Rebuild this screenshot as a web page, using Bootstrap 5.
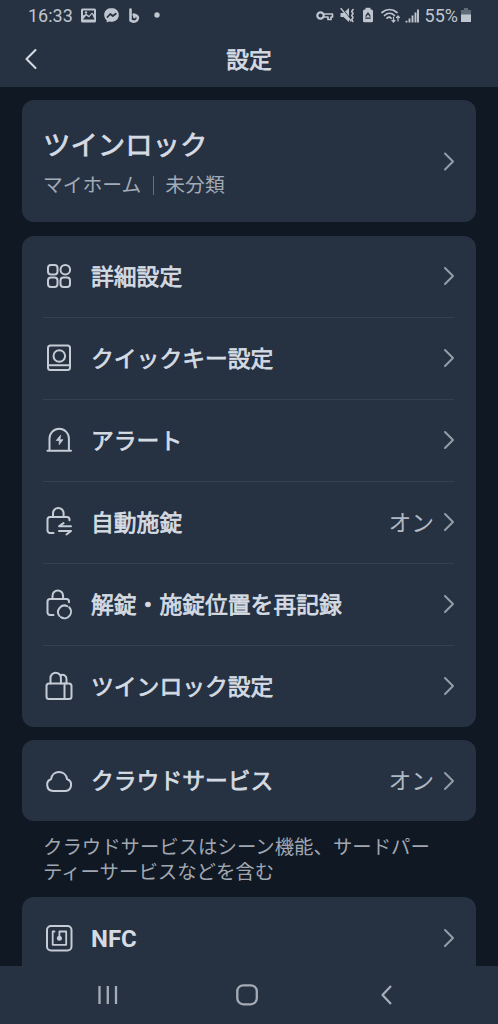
<!DOCTYPE html>
<html lang="ja" data-bs-theme="dark">
<head>
<meta charset="utf-8">
<meta name="viewport" content="width=device-width, initial-scale=1">
<title>設定</title>
<link href="https://cdn.jsdelivr.net/npm/bootstrap@5.3.0/dist/css/bootstrap.min.css" rel="stylesheet">
<style>
body{background:#101823;color:#d5dbe3;font-family:Roboto,"Noto Sans CJK JP",sans-serif;height:1024px}
svg{fill:none;stroke:currentColor;stroke-linecap:round;stroke-linejoin:round;flex:none;display:block;overflow:visible}
.surface{background:#263141}
.top-area{height:87px}
.status-bar{height:31px;padding:0 27px 0 28px;color:#c0c6cf;font-size:18px;line-height:31px}
.title-bar{height:56px;padding:0 24px}
.title-bar h1{font-size:22.8px;line-height:56px;padding:3px 14px 0 0}
.medium-text{font-weight:400;-webkit-text-stroke:.75px currentColor;color:#d5dbe3}
.panel{border:0;border-radius:12px;background:#263141;color:inherit;padding:0 22px 0 21px}
.stack{padding:13px 22px 0;gap:13.6px}
.device{height:122px}
.device h2{font-size:27.4px;line-height:38px}
.device-sub{font-size:19.8px;line-height:28px;color:#a3abb6;padding-top:3px}
.bar-sep{width:1px;height:19px;background:#66707d;margin:0 11px 0 12px}
.entry{height:82px;border-top:1px solid #36414f}
.entry:first-child{border-top:0;height:81px}
.ico{width:30px;height:30px;margin:0 17px 0 1px;color:#c5ccd5;stroke-width:2}
.entry-name{font-size:22.8px;line-height:34px;padding-top:3px}
.latin-name{font-size:24px;font-weight:700;padding-top:2px}
.entry-state{font-size:22.8px;line-height:34px;color:#b0b8c3;padding-top:3px}
.chev{width:12px;height:20px;stroke:#959da8;stroke-width:2}
.note{font-size:19.4px;line-height:25px;color:#a0a7b1;padding:0 0 0 21px;margin:0 0 -1px}
.nav-keys{height:58px;color:#a5acb6;padding-right:4px}
</style>
</head>
<body class="d-flex flex-column overflow-hidden">
<header class="surface top-area flex-shrink-0">
  <div class="status-bar d-flex align-items-center">
    <span>16:33</span>
    <svg width="84" height="20" viewBox="78 5 84 20" style="margin-left:5px" stroke="none">
      <rect x="81" y="7.500" width="15" height="14" rx="1.500" fill="currentColor" stroke="none"/>
      <path d="M83 18.500l3.200-4 2.800 2 3-3.500 2.500 5.500z" fill="#263141" stroke="none"/><path d="M83 14.500v-5h11v4l-2-2-3 3.300-2.700-2z" fill="#263141" stroke="none"/><circle cx="86" cy="11.500" r="1.200" fill="currentColor" stroke="none"/>
      <path d="M111.500 7c-4.300 0-7.300 3-7.300 7 0 2.200 1 4 2.500 5.200v2.300l2.400-1c5 1.200 9.700-1.800 9.700-6.500 0-4-3-7-7.300-7z" fill="currentColor" stroke="none"/>
      <path d="M107.500 16l2.800-3 2.500 2 3-2.300" stroke="#263141" stroke-width="1.800"/>
      <path d="M130.500 8.500v11l3 1.200c3 0 4.700-2 4.400-4.200-.4-2-2.400-2.600-4.200-3l.8 2.600" stroke="currentColor" stroke-width="2.600"/>
      <circle cx="157" cy="14" r="2.700" fill="currentColor" stroke="none"/>
    </svg>
    <svg class="ms-auto" width="106" height="22" viewBox="314 4 106 22" style="margin-right:4px">
      <circle cx="319.500" cy="14.500" r="3.200" stroke-width="2.200"/><path d="M323 13h8.500v3h-1.500v2.500h-3v-2.500h-4" stroke-width="1.700"/>
      <path d="M339.500 12h3l5.500-5v14l-5.500-5h-3z" fill="currentColor" stroke="none"/><path d="M341.200 7.500l9 11.500" stroke="#263141" stroke-width="1.200"/><path d="M340 7.500l10 12.500" stroke-width="1.300"/><path d="M352 8.500l-1.200 2 1.200 2-1.200 2 1.200 2-1.200 2 1 2" stroke-width="1.600"/>
      <rect x="362" y="8.500" width="10" height="12.700" rx="1.500" fill="currentColor" stroke="none"/><rect x="364.500" y="6.800" width="5" height="2.200" fill="currentColor" stroke="none"/><path d="M365 15.200l2-3.200 2 3.200M364.700 17.200h4.600" stroke="#263141" stroke-width="1.300"/>
      <path d="M381 11.500c4.500-4 10.500-4 15 0M383.500 14.500c3-2.800 7-2.800 10 0M386 17.200c1.500-1.400 3-1.400 4 0" stroke-width="1.700"/><path d="M392.500 16v5m-1.600-1.600l1.600 1.600 1.500-1.600M397 20v-5m-1.500 1.600l1.500-1.600 1.500 1.600" stroke-width="1.200"/>
      <path d="M405.500 19.800v1.700M408.500 17.500v4M411.500 14.500v7M414.500 11.500v10M417 8.500v13" stroke-width="1.900" stroke-linecap="butt"/>
    </svg>
    <span>55%</span>
    <svg width="10" height="16" viewBox="0 0 10 16" style="margin-left:3px"><path d="M3 0h4v2h3v5H0V2h3z" fill="#606b79" stroke="none"/><path d="M0 6.500h10V14H0z" fill="currentColor" stroke="none"/></svg>
  </div>
  <div class="title-bar d-flex align-items-center">
    <svg width="14" height="20" viewBox="0 0 14 20" stroke-width="2.100"><path d="M11.500 1L2.500 10l9 9"/></svg>
    <h1 class="medium-text flex-fill text-center m-0">設定</h1>
  </div>
</header>

<main class="stack d-flex flex-column flex-fill overflow-hidden">
  <section class="panel device d-flex align-items-center flex-shrink-0">
    <div class="flex-fill pt-1">
      <h2 class="medium-text m-0">ツインロック</h2>
      <div class="device-sub d-flex align-items-center mt-1"><span>マイホーム</span><i class="bar-sep"></i><span>未分類</span></div>
    </div>
    <svg class="chev" viewBox="0 0 12 20"><path d="M3 2.500l8 8-8 8"/></svg>
  </section>

  <section class="panel flex-shrink-0">
    <div class="entry d-flex align-items-center">
      <svg class="ico" viewBox="0 0 30 30"><rect x="4" y="4" width="9.500" height="9.500" rx="3"/><circle cx="21.300" cy="8.700" r="4.800"/><rect x="4" y="16.500" width="9.500" height="9.500" rx="3"/><rect x="16.500" y="16.500" width="9.500" height="9.500" rx="3"/></svg>
      <span class="entry-name medium-text flex-fill">詳細設定</span>
      <svg class="chev" viewBox="0 0 12 20"><path d="M3 2l8 8-8 8"/></svg>
    </div>
    <div class="entry d-flex align-items-center">
      <svg class="ico" viewBox="0 0 30 30"><rect x="4" y="2.500" width="22" height="24.500" rx="2.500"/><circle cx="15.300" cy="13" r="5.800"/><path d="M4.500 22.300h21"/></svg>
      <span class="entry-name medium-text flex-fill">クイックキー設定</span>
      <svg class="chev" viewBox="0 0 12 20"><path d="M3 2l8 8-8 8"/></svg>
    </div>
    <div class="entry d-flex align-items-center">
      <svg class="ico" viewBox="0 0 30 30"><path d="M5.500 25.500V13.500a9.700 9.700 0 0 1 19.400 0v12M3.500 25.800h23.500"/><path d="M16.500 10.300l-4.300 5.200h3v4.200l3.800-5h-2.800z" fill="currentColor" stroke-width=".7"/></svg>
      <span class="entry-name medium-text flex-fill">アラート</span>
      <svg class="chev" viewBox="0 0 12 20"><path d="M3 2l8 8-8 8"/></svg>
    </div>
    <div class="entry d-flex align-items-center">
      <svg class="ico" viewBox="0 0 30 30"><path d="M9 10V6.300a5.300 5.300 0 0 1 10.600 0V10M9.500 26H6a2.500 2.500 0 0 1-2.500-2.500v-11A2.500 2.500 0 0 1 6 10H23a2.500 2.500 0 0 1 2.500 2.500v.7M27 19.300H15l4.500-3.200M15 24H27l-4.500 3.500"/></svg>
      <span class="entry-name medium-text flex-fill">自動施錠</span>
      <span class="entry-state me-2">オン</span>
      <svg class="chev" viewBox="0 0 12 20"><path d="M3 2l8 8-8 8"/></svg>
    </div>
    <div class="entry d-flex align-items-center">
      <svg class="ico" viewBox="0 0 30 30"><path d="M8.500 10V6.800a5.300 5.300 0 0 1 10.600 0V10M9.500 26H6a2.500 2.500 0 0 1-2.500-2.500v-11A2.500 2.500 0 0 1 6 10H22.500a2.500 2.500 0 0 1 2.500 2.500v.7"/><path d="M15.400 27a6.500 6.500 0 0 1 7.800-9.900M25.200 18.300a6.500 6.500 0 0 1-8.300 9.900"/></svg>
      <span class="entry-name medium-text flex-fill">解錠・施錠位置を再記録</span>
      <svg class="chev" viewBox="0 0 12 20"><path d="M3 2l8 8-8 8"/></svg>
    </div>
    <div class="entry d-flex align-items-center">
      <svg class="ico" viewBox="0 0 30 30"><rect x="2.500" y="12.500" width="25" height="15.500" rx="2.500"/><path d="M20.500 12.500v15.500M6.500 12.500V7a5.200 5.200 0 0 1 10.400 0V12.500M16.500 4.300a4 4 0 0 1 6 3.700V12.500"/></svg>
      <span class="entry-name medium-text flex-fill">ツインロック設定</span>
      <svg class="chev" viewBox="0 0 12 20"><path d="M3 2l8 8-8 8"/></svg>
    </div>
  </section>

  <section class="panel flex-shrink-0">
    <div class="entry d-flex align-items-center">
      <svg class="ico" viewBox="0 0 30 30"><path d="M9 25a6.200 6.200 0 0 1-1.800-12c1-9.300 14.500-9.300 15.800 0A6.200 6.200 0 0 1 21.500 25z"/></svg>
      <span class="entry-name medium-text flex-fill">クラウドサービス</span>
      <span class="entry-state me-2">オン</span>
      <svg class="chev" viewBox="0 0 12 20"><path d="M3 2l8 8-8 8"/></svg>
    </div>
  </section>

  <p class="note flex-shrink-0">クラウドサービスはシーン機能、サードパー<br>ティーサービスなどを含む</p>

  <section class="panel flex-shrink-0">
    <div class="entry d-flex align-items-center">
      <svg class="ico" viewBox="0 0 30 30"><rect x="3" y="3" width="24.500" height="24.500" rx="4"/><path d="M10.500 8.500H8.700v13.300h13.500V8.500h-6.800V14" stroke-width="1.800"/><circle cx="15.400" cy="15.300" r="2.500" fill="currentColor" stroke="none"/></svg>
      <span class="entry-name latin-name flex-fill">NFC</span>
      <svg class="chev" viewBox="0 0 12 20"><path d="M3 2l8 8-8 8"/></svg>
    </div>
  </section>
</main>

<nav class="surface nav-keys d-flex align-items-center justify-content-center flex-shrink-0">
  <svg width="300" height="24" viewBox="97 984 300 24" stroke-width="2.300"><path d="M99.500 987v18M107.800 987v18M116 987v18" stroke-linecap="butt"/><rect x="237.300" y="986.300" width="19.500" height="19" rx="6"/><path d="M391 987l-8.500 9 8.500 9" stroke-linecap="butt"/></svg>
</nav>
<script src="https://cdn.jsdelivr.net/npm/bootstrap@5.3.0/dist/js/bootstrap.bundle.min.js"></script>
</body>
</html>
